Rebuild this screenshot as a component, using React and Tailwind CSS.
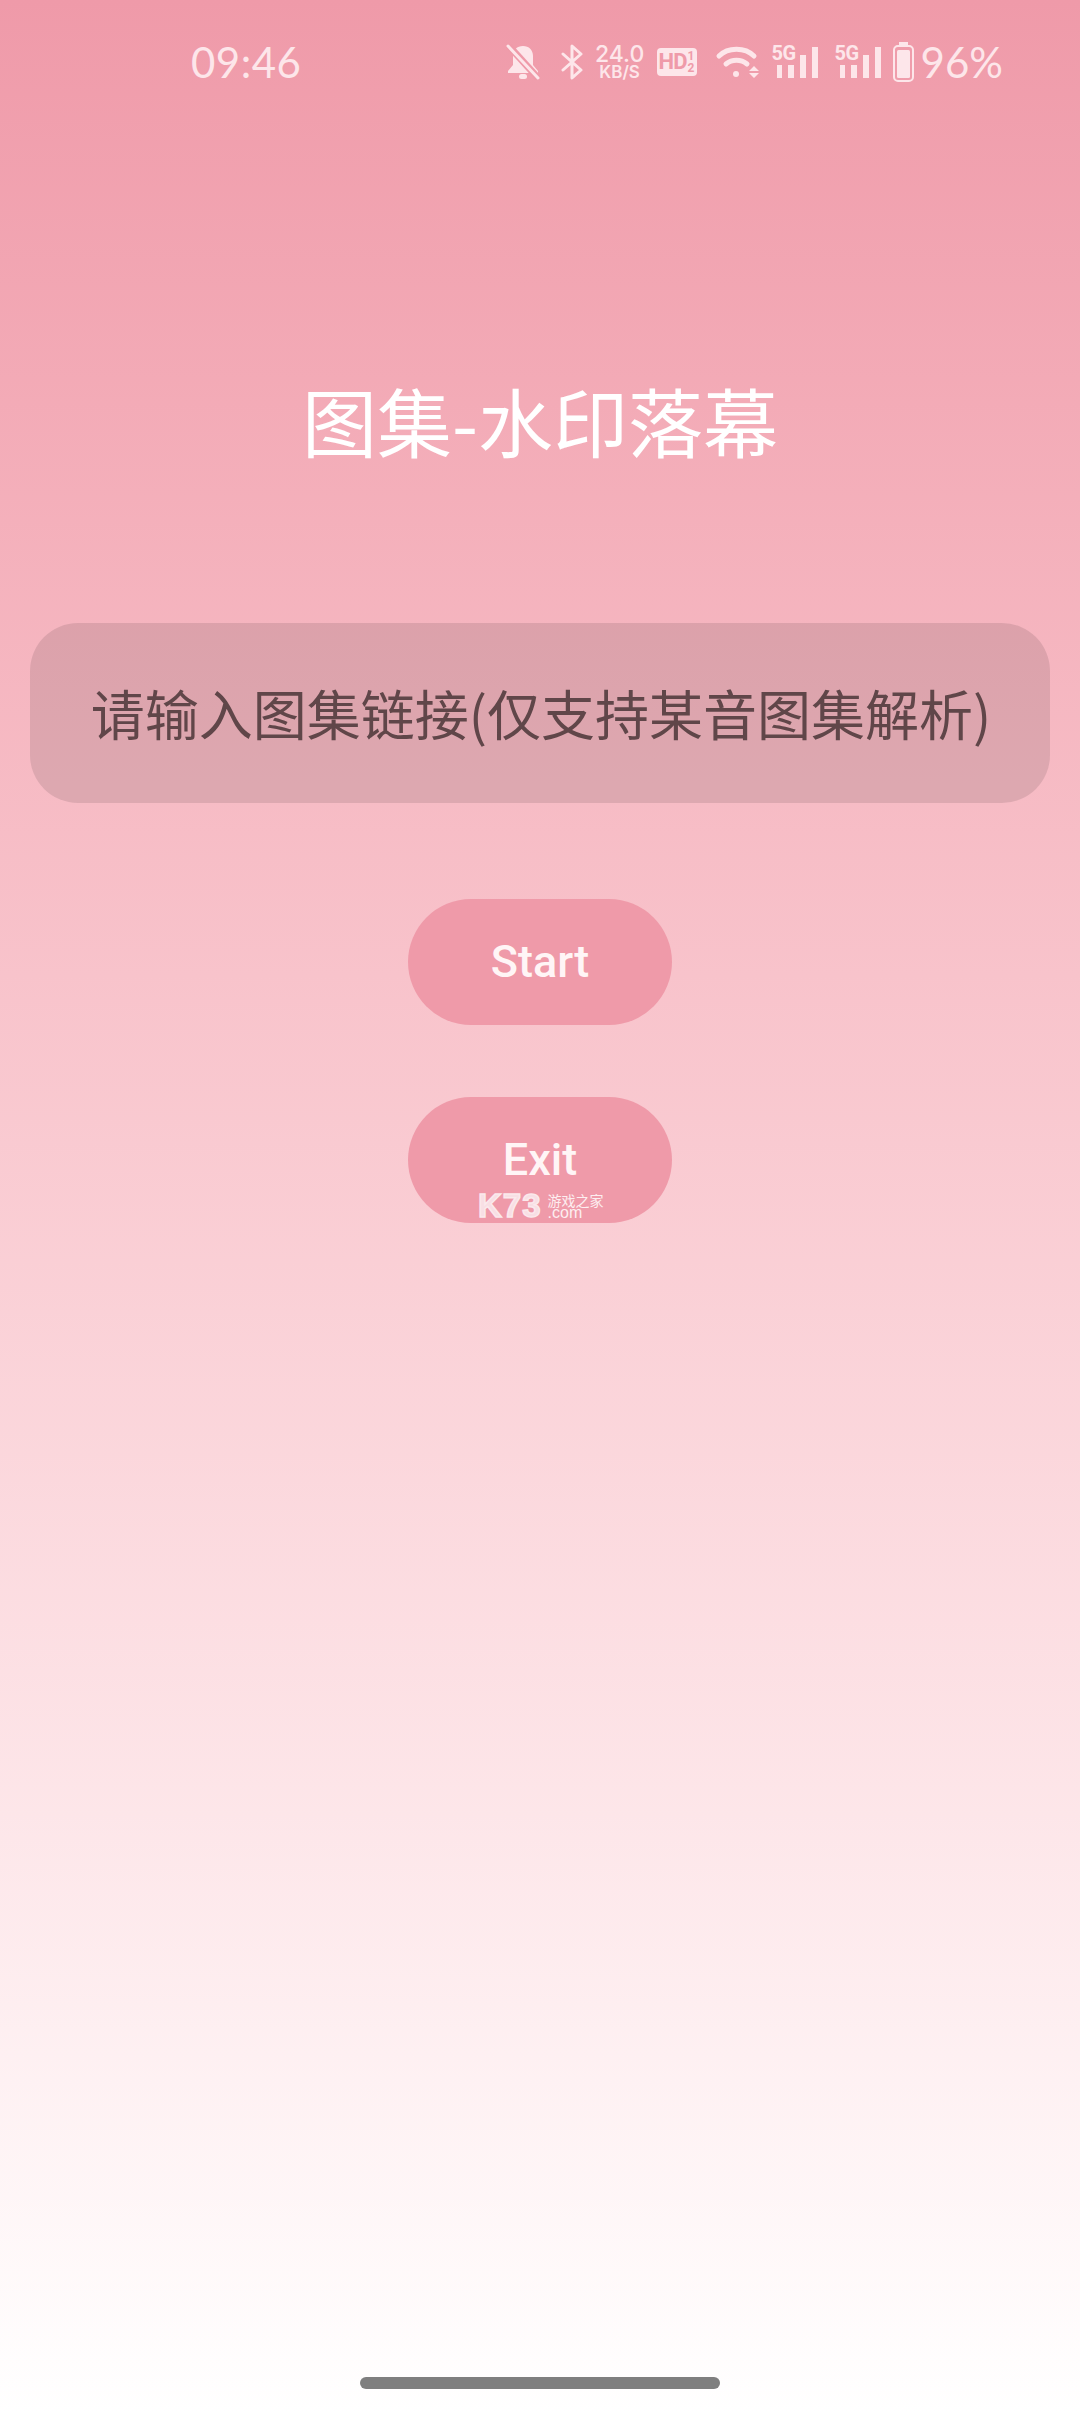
const StatusIcons = () => (
  <div className="flex items-center">
    {/* muted bell */}
    <svg width="34" height="36" viewBox="0 0 34 36">
      <path d="M17 2c-6 0-10 4-10 10v9l-5 6v2h30v-2l-5-6v-9c0-6-4-10-10-10z" fill="#fde6ea" />
      <rect x="13" y="30" width="8" height="5" rx="2.5" fill="#fde6ea" />
      <path d="M2 1l30 33" stroke="#ef9aa9" strokeWidth="7" />
      <path d="M2 2l30 32" stroke="#fde6ea" strokeWidth="3" strokeLinecap="round" />
    </svg>
    {/* bluetooth */}
    <svg width="22" height="36" viewBox="0 0 22 36" className="ml-[21px]" fill="none" stroke="#fde6ea" strokeWidth="3" strokeLinejoin="round" strokeLinecap="round">
      <path d="M2 10l18 16-9 8V2l9 8L2 26" />
    </svg>
    <div className="ml-[13px] w-[48px] flex flex-col items-center font-['Inter',sans-serif] text-[#fde6ea]">
      <span className="text-[23px] leading-[21px] font-medium">24.0</span>
      <span className="text-[17px] leading-[15px] font-semibold">KB/S</span>
    </div>
    {/* HD badge */}
    <div className="ml-[13px] w-[40px] h-[28px] bg-[#fde6ea] rounded-[4px] flex items-center pl-[2px] gap-[1px] font-['Roboto',sans-serif] text-[#ef9aa9]">
      <span className="text-[22px] leading-none font-bold tracking-[-1px]">HD</span>
      <span className="flex flex-col text-[12px] leading-[12px] font-bold">
        <span>1</span>
        <span>2</span>
      </span>
    </div>
    {/* wifi */}
    <svg width="44" height="36" viewBox="0 0 44 36" className="ml-[18px]" fill="none" stroke="#fde6ea" strokeWidth="5" strokeLinecap="round">
      <path d="M4 12C13 3 30 3 39 12" />
      <path d="M11 20c6-5 15-5 21 0" />
      <circle cx="21" cy="30" r="3" fill="#fde6ea" stroke="none" />
      <path d="M34 27l5-5 5 5zM34 29l5 5 5-5z" fill="#fde6ea" stroke="none" />
    </svg>
    {[0, 1].map((n) => (
      <div key={n} className={`relative w-[46px] h-[32px] ${n === 0 ? 'ml-[13px]' : 'ml-[17px]'}`}>
        <span className="absolute left-0 top-[-3px] font-['Roboto',sans-serif] text-[#fde6ea] text-[20px] leading-[20px] font-bold tracking-[-0.5px]">5G</span>
        <div className="absolute left-[5px] right-0 bottom-0 flex items-end gap-[6px]">
          <div className="w-[6px] h-[13px] bg-[#fde6ea]" />
          <div className="w-[6px] h-[13px] bg-[#fde6ea]" />
          <div className="w-[6px] h-[23px] bg-[#fde6ea]" />
          <div className="w-[6px] h-[31px] bg-[#fde6ea]" />
        </div>
      </div>
    ))}
    {/* battery */}
    <svg width="21" height="40" viewBox="0 0 21 40" className="ml-[12px]">
      <rect x="6" y="0" width="9" height="3" fill="#fde6ea" />
      <rect x="1" y="4" width="19" height="35" rx="4" fill="none" stroke="#fde6ea" strokeWidth="2" />
      <rect x="4" y="8" width="13" height="28" rx="1.5" fill="#fde6ea" />
    </svg>
    <span className="ml-[7px] font-['Lato',sans-serif] text-[42px] leading-none text-[#fde6ea]">96%</span>
  </div>
);

export default function App() {
  return (
    <div className="relative w-[1080px] h-[2412px] flex flex-col items-center overflow-hidden bg-gradient-to-b from-[#ef9aa9] to-[#ffffff] font-['Noto_Sans_CJK_SC','Noto_Sans',sans-serif]">
      {/* status bar */}
      <div className="w-full h-[124px] shrink-0 flex items-center justify-between pl-[191px] pr-[77px]">
        <span className="font-['Lato',sans-serif] text-[42px] leading-none tracking-[0.5px] text-[#fde6ea]">09:46</span>
        <StatusIcons />
      </div>

      <h1 className="mt-[246px] text-[75px] leading-[100px] font-normal text-white">图集-水印落幕</h1>

      <div className="mt-[153px] w-[1020px] h-[180px] shrink-0 rounded-[48px] bg-black/10 flex items-center justify-center pl-[2px]">
        <span className="text-[54px] leading-none text-[#604649]">请输入图集链接(仅支持某音图集解析)</span>
      </div>

      <button className="mt-[96px] w-[264px] h-[126px] shrink-0 rounded-[63px] bg-[#ef9aa9] text-[45px] font-medium font-['Roboto',sans-serif] text-[#fff5f6]">
        Start
      </button>
      <button className="relative mt-[72px] w-[264px] h-[126px] shrink-0 rounded-[63px] bg-[#ef9aa9] text-[45px] font-medium font-['Roboto',sans-serif] text-[#fff5f6]">
        Exit
      </button>

      {/* site watermark over the Exit button */}
      <div className="absolute left-[478px] top-[1193px] flex items-center gap-[6px]">
        <span className="font-['Liberation_Sans',sans-serif] font-bold text-[33px] leading-[26px] tracking-[1px] text-[#f8dfe4] [-webkit-text-stroke:1.5px_#fbe9ec]">K73</span>
        <div className="flex flex-col items-start text-[#fdeef0]">
          <span className="text-[14px] leading-[14px]">游戏之家</span>
          <span className="font-['Liberation_Sans',sans-serif] text-[16px] leading-[12px]">.com</span>
        </div>
      </div>

      {/* home indicator */}
      <div className="absolute left-[360px] bottom-[23px] w-[360px] h-[12px] rounded-full bg-[#7f7f7f]" />
    </div>
  );
}
